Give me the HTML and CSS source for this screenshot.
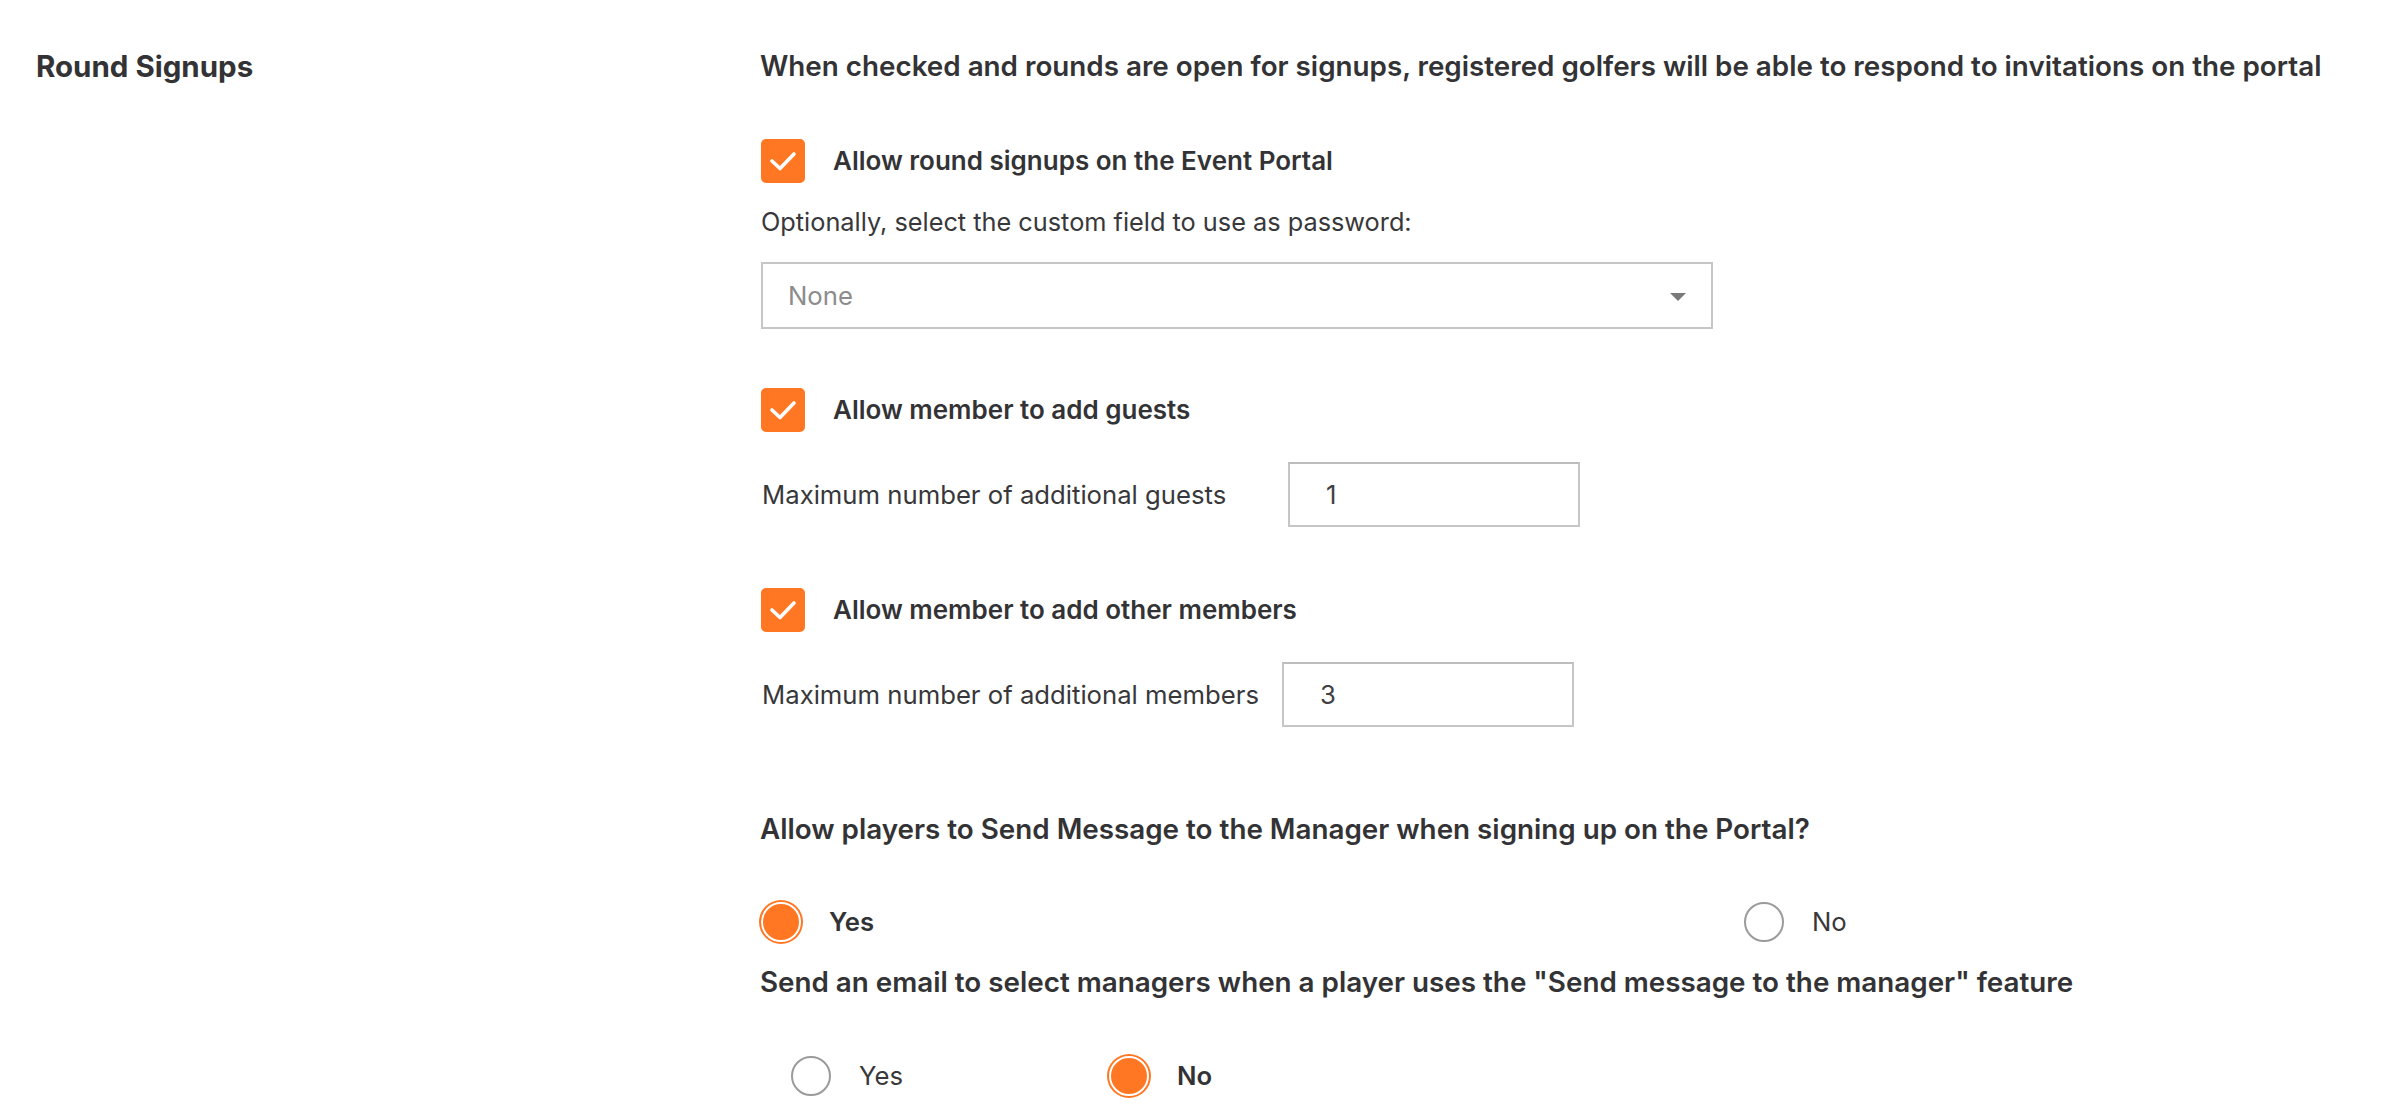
FILE: index.html
```html
<!DOCTYPE html>
<html>
<head>
<meta charset="utf-8">
<link rel="stylesheet" href="styles.css">
</head>
<body>
<div class="page">
  <div class="side">
    <h2 class="section-title">Round Signups</h2>
  </div>
  <div class="main">
    <p class="desc">When checked and rounds are open for signups, registered golfers will be able to respond to invitations on the portal</p>

    <div class="check-row row-first">
      <span class="checkbox"><svg viewBox="0 0 44 44" width="44" height="44"><polyline points="11,22 19,29.5 33,15" fill="none" stroke="#fff" stroke-width="3.6" stroke-linecap="round" stroke-linejoin="round"/></svg></span>
      <span class="check-label">Allow round signups on the Event Portal</span>
    </div>

    <p class="hint">Optionally, select the custom field to use as password:</p>

    <div class="select">
      <span class="select-value">None</span>
      <span class="select-arrow"></span>
    </div>

    <div class="check-row row-second">
      <span class="checkbox"><svg viewBox="0 0 44 44" width="44" height="44"><polyline points="11,22 19,29.5 33,15" fill="none" stroke="#fff" stroke-width="3.6" stroke-linecap="round" stroke-linejoin="round"/></svg></span>
      <span class="check-label">Allow member to add guests</span>
    </div>

    <div class="field-row">
      <label class="field-label label-guests">Maximum number of additional guests</label>
      <input class="num-input" type="text" value="1">
    </div>

    <div class="check-row row-third">
      <span class="checkbox"><svg viewBox="0 0 44 44" width="44" height="44"><polyline points="11,22 19,29.5 33,15" fill="none" stroke="#fff" stroke-width="3.6" stroke-linecap="round" stroke-linejoin="round"/></svg></span>
      <span class="check-label">Allow member to add other members</span>
    </div>

    <div class="field-row">
      <label class="field-label label-members">Maximum number of additional members</label>
      <input class="num-input" type="text" value="3">
    </div>

    <p class="question q-first">Allow players to Send Message to the Manager when signing up on the Portal?</p>

    <div class="radio-row radio-row-wide">
      <div class="radio-option option-wide">
        <span class="radio checked"></span>
        <span class="radio-label selected">Yes</span>
      </div>
      <div class="radio-option">
        <span class="radio"></span>
        <span class="radio-label">No</span>
      </div>
    </div>

    <p class="question q-second">Send an email to select managers when a player uses the "Send message to the manager" feature</p>

    <div class="radio-row radio-row-narrow">
      <div class="radio-option option-narrow">
        <span class="radio"></span>
        <span class="radio-label">Yes</span>
      </div>
      <div class="radio-option">
        <span class="radio checked"></span>
        <span class="radio-label selected">No</span>
      </div>
    </div>
  </div>
</div>
</body>
</html>
```
FILE: styles.css
```css
* { box-sizing: border-box; }

html, body {
  margin: 0;
  padding: 0;
  background: #ffffff;
}

body {
  font-family: "Inter", "Liberation Sans", sans-serif;
  color: #333336;
}

.page {
  display: flex;
  padding-top: 44px;
}

.side {
  width: 760px;
  flex: none;
  padding-left: 36px;
}

.section-title {
  margin: 0;
  font-size: 29.5px;
  font-weight: 700;
  line-height: 44px;
  color: #333336;
}

.main {
  flex: 1;
  display: flex;
  flex-direction: column;
  align-items: flex-start;
}

.desc {
  margin: 0;
  font-size: 27.8px;
  font-weight: 600;
  line-height: 44px;
  white-space: nowrap;
}

.check-row {
  display: flex;
  align-items: center;
  height: 44px;
  padding-left: 1px;
}

.row-first { margin-top: 51px; }
.row-second { margin-top: 59px; }
.row-third { margin-top: 61px; }

.checkbox {
  width: 44px;
  height: 44px;
  border-radius: 5px;
  background: #ff7722;
  display: flex;
  flex: none;
}

.checkbox svg { display: block; }

.check-label {
  margin-left: 28px;
  font-size: 26px;
  font-weight: 600;
  line-height: 44px;
  white-space: nowrap;
}

.hint {
  margin: 21px 0 0 1px;
  font-size: 25.3px;
  font-weight: 400;
  line-height: 36px;
  white-space: nowrap;
  color: #38383b;
}

.select {
  margin-top: 22px;
  margin-left: 1px;
  width: 952px;
  height: 67px;
  border: 2px solid #c6c6c6;
  background: #fff;
  display: flex;
  align-items: center;
  justify-content: space-between;
  padding: 0 25px 0 25px;
}

.select-value {
  font-size: 25.7px;
  color: #8c8c8c;
  line-height: 36px;
}

.select-arrow {
  width: 0;
  height: 0;
  border-left: 8px solid transparent;
  border-right: 8px solid transparent;
  border-top: 8px solid #7a7a7a;
  margin-top: 2px;
}

.field-row {
  display: flex;
  align-items: center;
  height: 65px;
  margin-top: 30px;
  padding-left: 2px;
}

.field-label {
  font-size: 25.7px;
  font-weight: 400;
  line-height: 36px;
  white-space: nowrap;
  color: #38383b;
  flex: none;
}

.label-guests { width: 526px; }
.label-members { width: 520px; }

.num-input {
  width: 292px;
  height: 65px;
  border: 2px solid #c6c6c6;
  border-top-color: #bdbdbd;
  background: #fff;
  padding: 0 0 0 36px;
  font-family: "Inter", "Liberation Sans", sans-serif;
  font-size: 25.7px;
  color: #404043;
  outline: none;
  margin: 0;
}

.question {
  margin: 0;
  font-size: 27.8px;
  font-weight: 600;
  line-height: 44px;
  white-space: nowrap;
}

.q-first { margin-top: 80px; }
.q-second { margin-top: 16px; }

.radio-row {
  display: flex;
  align-items: center;
  height: 44px;
}

.radio-row-wide { margin-top: 49px; padding-left: 1px; }
.radio-row-narrow { margin-top: 50px; padding-left: 31px; }

.radio-option {
  display: flex;
  align-items: center;
}

.option-wide { width: 983px; }
.option-narrow { width: 318px; }

.radio {
  width: 40px;
  height: 40px;
  border-radius: 50%;
  border: 2px solid #9b9b9b;
  background: #fff;
  flex: none;
}

.radio.checked {
  border: 2px solid #ffffff;
  background: #ff7722;
  box-shadow: 0 0 0 2px #ff7722;
}

.radio-label {
  margin-left: 28px;
  font-size: 25.7px;
  font-weight: 400;
  line-height: 36px;
  color: #38383b;
}

.radio-label.selected {
  font-weight: 600;
  color: #333336;
}
```
